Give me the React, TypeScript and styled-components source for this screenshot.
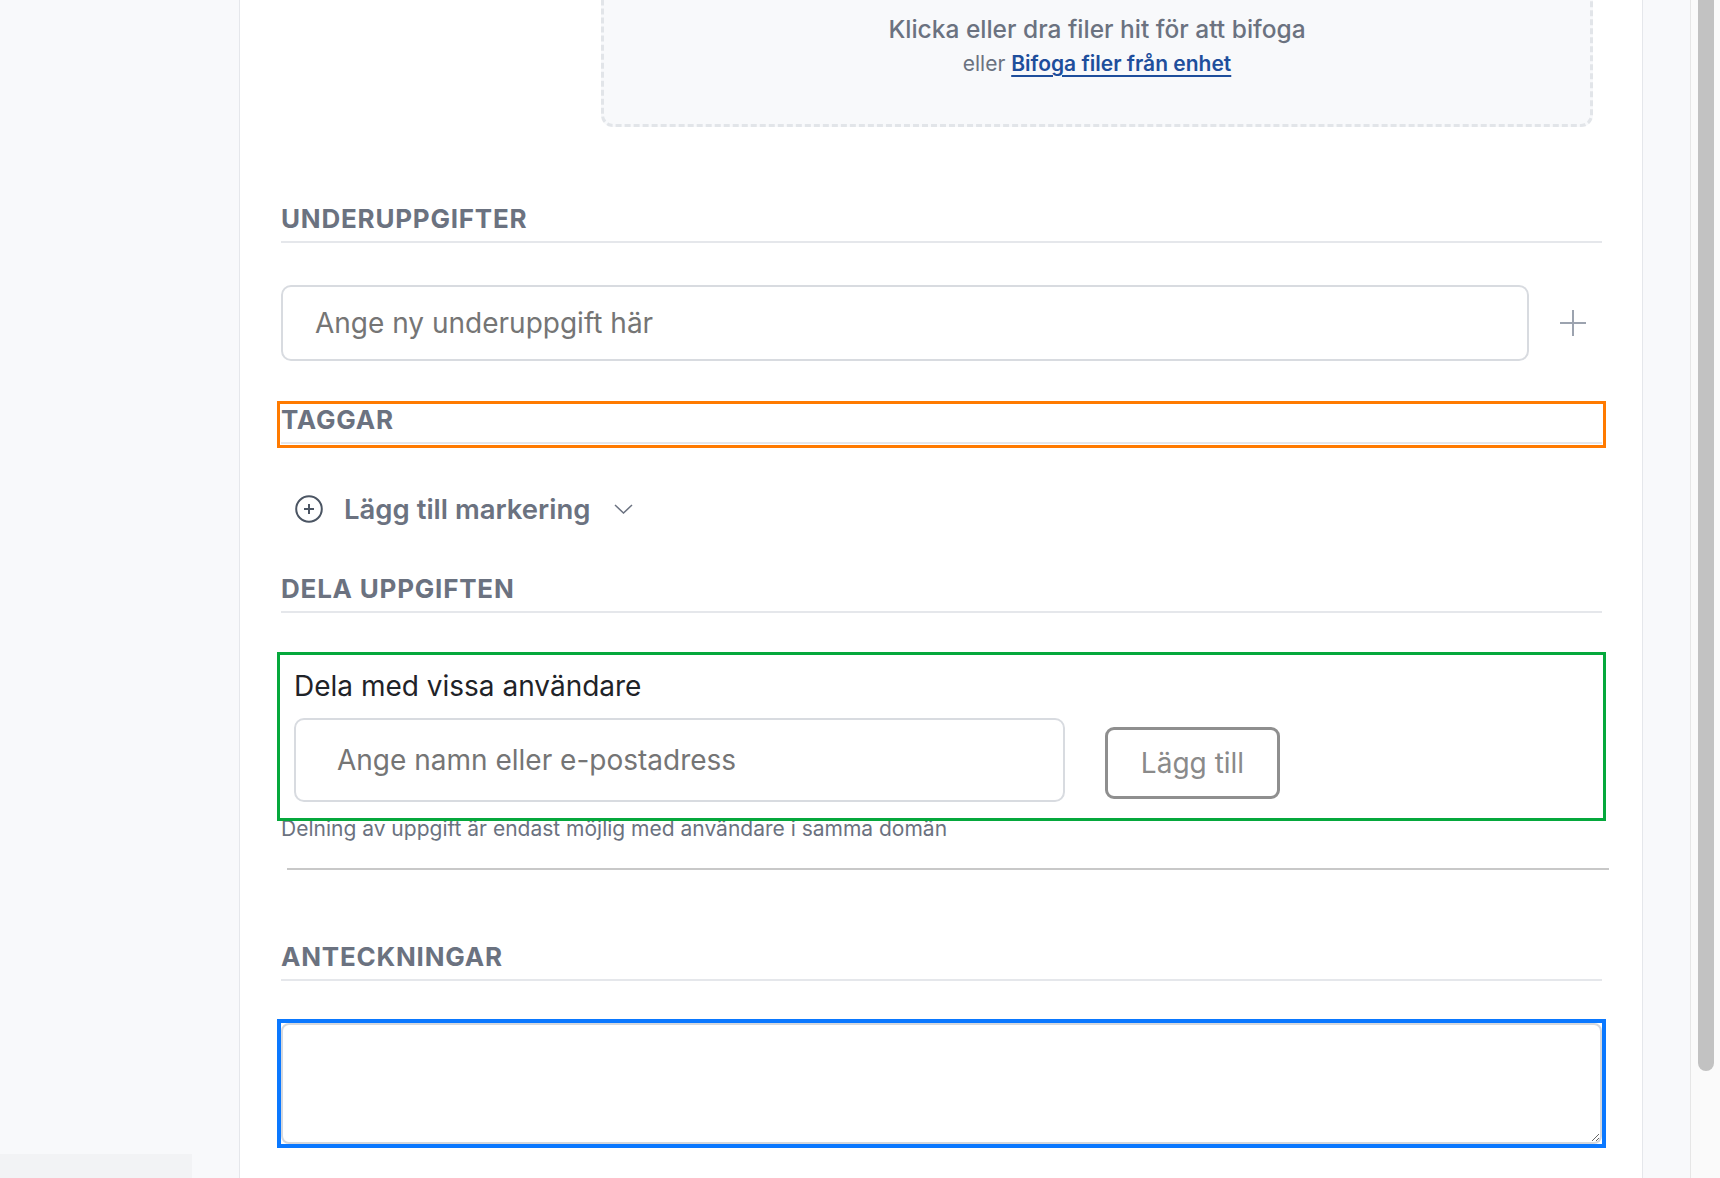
import React from 'react';
import styled, { createGlobalStyle } from 'styled-components';

const GlobalStyle = createGlobalStyle`
    html, body {
        margin: 0;
        padding: 0;
        height: 100%;
        overflow: hidden;
    }
    body {
        font-family: Inter, 'Noto Sans', 'Liberation Sans', sans-serif;
        background: #ffffff;
    }
    #root {
        height: 100%;
    }
`;

const Page = styled.div`
    display: flex;
    height: 100vh;
    overflow: hidden;
`;

const NavRail = styled.aside`
    flex: none;
    width: 239px;
    display: flex;
    flex-direction: column;
    justify-content: flex-end;
    background: #f8f9fb;
    border-right: 1px solid #e5e7eb;
`;

const NavFooter = styled.div`
    width: 192px;
    height: 24px;
    background: #f2f3f5;
`;

const Sheet = styled.main`
    flex: none;
    width: 1403px;
    box-sizing: border-box;
    padding: 0 40px 0 41px;
    background: #ffffff;
    border-right: 1px solid #e5e7eb;
`;

const Gutter = styled.div`
    flex: none;
    width: 47px;
    background: #f8f9fb;
`;

const ScrollTrack = styled.div`
    flex: 1;
    padding-left: 7px;
    background: #fafafa;
    border-left: 1px solid #e6e6e6;
`;

const ScrollThumb = styled.div`
    width: 16px;
    height: 1071px;
    background: #c2c2c2;
    border-radius: 0 0 8px 8px;
`;

/* attachments */
const AttachRow = styled.div`
    display: grid;
    grid-template-columns: 320px 1fr;
    margin: -44px 9px 0 0;
`;

const Dropzone = styled.div`
    padding: 56px 24px 47px;
    background: #f8f9fb;
    border: 3px dashed #e2e5e9;
    border-radius: 12px;
    text-align: center;
`;

const DropTitle = styled.div`
    font-size: 24.5px;
    line-height: 28px;
    font-weight: 500;
    color: #6b7280;
`;

const DropHint = styled.div`
    margin-top: 8px;
    font-size: 21px;
    line-height: 26px;
    color: #6b7280;
`;

const DropLink = styled.a`
    font-weight: 600;
    color: #1e4e9c;
    text-decoration: underline;
    text-decoration-thickness: 2px;
    text-underline-offset: 4px;
    cursor: pointer;
`;

/* section headings */
const SectionHeading = styled.h3<{ $top: number; $outline?: string }>`
    margin: ${p => p.$top}px 0 0;
    padding-bottom: 7px;
    font-size: 26px;
    line-height: 30px;
    font-weight: 700;
    letter-spacing: 0.03em;
    text-transform: uppercase;
    color: #6b7280;
    border-bottom: 2px solid #e5e7eb;
    outline: ${p => (p.$outline ? `3px solid ${p.$outline}` : 'none')};
    outline-offset: 1px;
`;

/* subtasks */
const SubtaskRow = styled.div`
    display: flex;
    align-items: center;
    gap: 30px;
    margin-top: 42px;
    padding-right: 15px;
`;

const TextInput = styled.input<{ $muted?: boolean }>`
    box-sizing: border-box;
    height: ${p => (p.$muted ? 84 : 76)}px;
    padding: 0 0 0 ${p => (p.$muted ? 41 : 32)}px;
    font-family: inherit;
    font-size: 28px;
    color: #1f2328;
    background: #ffffff;
    border: 2px solid #d8dbe0;
    border-radius: 10px;
    outline: none;

    ::placeholder {
        color: ${p => (p.$muted ? '#777777' : '#52575e')};
    }
`;

const SubtaskInput = styled(TextInput)`
    flex: 1;
`;

const IconButton = styled.button`
    display: flex;
    padding: 0;
    background: none;
    border: 0;
    color: #9ca3af;
    cursor: pointer;
`;

/* tags */
const TagPicker = styled.button`
    display: flex;
    align-items: center;
    height: 40px;
    margin: 45px 0;
    padding: 0 0 0 14px;
    background: none;
    border: 0;
    font-family: inherit;
    font-size: 27.5px;
    font-weight: 600;
    color: #6b7280;
    cursor: pointer;
`;

const TagLabel = styled.span`
    margin: 0 23px 0 21px;
`;

/* sharing */
const ShareBox = styled.div`
    margin-top: 43px;
    padding: 14px 13px 15px;
    outline: 3px solid #05a83c;
    outline-offset: 1px;
`;

const ShareLabel = styled.div`
    margin-bottom: 16px;
    font-size: 28px;
    line-height: 32px;
    color: #1f2328;
`;

const ShareRow = styled.div`
    display: flex;
    align-items: center;
    gap: 40px;
`;

const ShareInput = styled(TextInput)`
    width: 771px;
`;

const OutlineButton = styled.button`
    box-sizing: border-box;
    width: 175px;
    height: 72px;
    margin-top: 5px;
    font-family: inherit;
    font-size: 28px;
    color: #8a8a8a;
    background: #ffffff;
    border: 3px solid #8f8f8f;
    border-radius: 9px;
    cursor: pointer;
`;

const HelperText = styled.p`
    margin: 0;
    font-size: 21px;
    line-height: 24px;
    color: #6b7280;
`;

const Divider = styled.hr`
    height: 2px;
    margin: 27px -7px 0 6px;
    background: #c8c8c8;
    border: 0;
`;

/* notes */
const NotesFrame = styled.div`
    margin-top: 42px;
    outline: 4px solid #0a78ff;
`;

const NotesArea = styled.textarea`
    display: block;
    box-sizing: border-box;
    width: 100%;
    height: 121px;
    padding: 12px 16px;
    font-family: inherit;
    font-size: 24px;
    border: 2px solid #d5d8dd;
    border-radius: 8px;
    resize: vertical;
    outline: none;
`;

const PlusIcon = () => (
    <svg width="28" height="28" viewBox="0 0 28 28" fill="none" stroke="currentColor" strokeWidth="2">
        <line x1="14" y1="1" x2="14" y2="27" />
        <line x1="1" y1="14" x2="27" y2="14" />
    </svg>
);

const CirclePlusIcon = () => (
    <svg width="28" height="28" viewBox="0 0 28 28" fill="none" stroke="#4b5563" strokeWidth="2">
        <circle cx="14" cy="14" r="12.8" />
        <line x1="14" y1="9" x2="14" y2="19" />
        <line x1="9" y1="14" x2="19" y2="14" />
    </svg>
);

const ChevronIcon = () => (
    <svg width="19" height="10" viewBox="0 0 19 10" fill="none" stroke="#6b7280" strokeWidth="1.5">
        <polyline points="1,1 9.5,9 18,1" />
    </svg>
);

const App = () => {
    return (
        <Page>
            <GlobalStyle />
            <NavRail>
                <NavFooter />
            </NavRail>
            <Sheet>
                <AttachRow>
                    <div />
                    <Dropzone>
                        <DropTitle>Klicka eller dra filer hit för att bifoga</DropTitle>
                        <DropHint>
                            eller <DropLink>Bifoga filer från enhet</DropLink>
                        </DropHint>
                    </Dropzone>
                </AttachRow>

                <SectionHeading $top={77}>Underuppgifter</SectionHeading>
                <SubtaskRow>
                    <SubtaskInput placeholder="Ange ny underuppgift här" />
                    <IconButton title="Lägg till underuppgift">
                        <PlusIcon />
                    </IconButton>
                </SubtaskRow>

                <SectionHeading $top={44} $outline="#ff7a00">
                    Taggar
                </SectionHeading>
                <TagPicker>
                    <CirclePlusIcon />
                    <TagLabel>Lägg till markering</TagLabel>
                    <ChevronIcon />
                </TagPicker>

                <SectionHeading $top={0}>Dela uppgiften</SectionHeading>
                <ShareBox>
                    <ShareLabel>Dela med vissa användare</ShareLabel>
                    <ShareRow>
                        <ShareInput $muted placeholder="Ange namn eller e-postadress" />
                        <OutlineButton>Lägg till</OutlineButton>
                    </ShareRow>
                </ShareBox>
                <HelperText>Delning av uppgift är endast möjlig med användare i samma domän</HelperText>
                <Divider />

                <SectionHeading $top={72}>Anteckningar</SectionHeading>
                <NotesFrame>
                    <NotesArea />
                </NotesFrame>
            </Sheet>
            <Gutter />
            <ScrollTrack>
                <ScrollThumb />
            </ScrollTrack>
        </Page>
    );
};

export default App;
